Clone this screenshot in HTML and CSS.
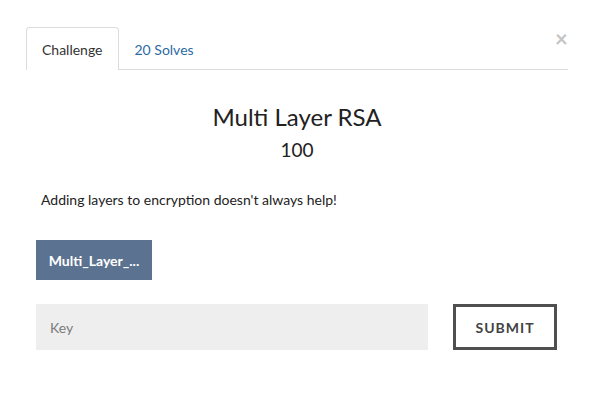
FILE: index.html
```html
<!DOCTYPE html>
<html>
<head>
<meta charset="utf-8">
<link rel="stylesheet" href="styles.css">
</head>
<body>
<div class="modal">
  <span class="close">&times;</span>
  <nav class="tabs">
    <a class="tab active">Challenge</a>
    <a class="tab">20 Solves</a>
  </nav>
  <div class="content">
    <h2 class="title">Multi Layer RSA</h2>
    <h3 class="value">100</h3>
    <p class="desc">Adding layers to encryption doesn't always help!</p>
    <div class="files">
      <a class="file-btn">Multi_Layer_...</a>
    </div>
    <form class="submit-row">
      <input class="key" type="text" placeholder="Key">
      <button class="submit" type="button">SUBMIT</button>
    </form>
  </div>
</div>
</body>
</html>
```
FILE: styles.css
```css
* { box-sizing: border-box; }
body {
  margin: 0;
  background: #fff;
  font-family: Lato, "Open Sans", sans-serif;
  color: #212529;
}
.modal {
  position: relative;
  width: 594px;
  padding: 27px 26px 0 26px;
}
.close {
  position: absolute;
  left: 555px;
  top: 27px;
  font-size: 22px;
  font-weight: 700;
  line-height: 24px;
  color: #c4c4c4;
}
.tabs {
  display: flex;
  height: 43px;
  border-bottom: 1px solid #dcdcdc;
}
.tab {
  display: flex;
  align-items: center;
  height: 43px;
  padding: 0 15px;
  font-size: 14px;
  color: #2d6aa3;
  border: 1px solid transparent;
  border-bottom: none;
  border-radius: 4px 4px 0 0;
}
.tab.active {
  color: #333;
  background: #fff;
  border-color: #dcdcdc;
}
.content {
  display: flex;
  flex-direction: column;
  padding: 0 10px;
}
.title {
  margin: 32px 0 0 0;
  text-align: center;
  font-size: 24px;
  line-height: 29px;
  font-weight: 400;
  color: #222;
}
.value {
  margin: 7px 0 0 0;
  text-align: center;
  font-size: 19px;
  line-height: 24px;
  font-weight: 400;
  color: #222;
}
.desc {
  margin: 28px 0 0 5px;
  font-size: 14px;
  line-height: 20px;
  color: #222;
}
.files {
  display: flex;
  margin-top: 30px;
}
.file-btn {
  display: flex;
  align-items: center;
  justify-content: center;
  width: 116px;
  height: 40px;
  background: #5b7290;
  color: #fff;
  font-size: 14px;
  font-weight: 700;
}
.submit-row {
  display: flex;
  align-items: flex-start;
  gap: 25px;
  margin: 24px 0 0 0;
}
.key {
  width: 392px;
  height: 46px;
  border: none;
  background: #eeeeee;
  padding: 0 14px;
  font-family: Lato, sans-serif;
  font-size: 14px;
  color: #555;
  outline: none;
}
.key::placeholder { color: #7b7b7b; }
.submit {
  width: 104px;
  height: 46px;
  border: 3px solid #4f4f4f;
  background: #fff;
  font-family: Lato, sans-serif;
  font-size: 14px;
  font-weight: 700;
  letter-spacing: 1px;
  color: #444;
}
```
